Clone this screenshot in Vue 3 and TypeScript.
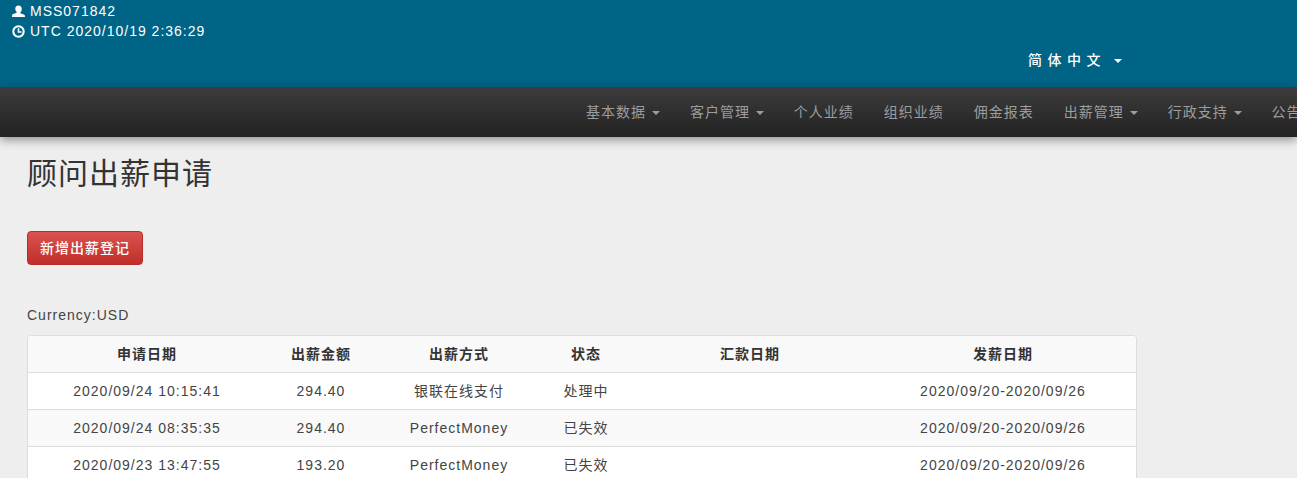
<script setup lang="ts">
interface NavItem { label: string; caret: boolean }
interface Row { applied: string; amount: string; method: string; status: string; remit: string; pay: string }
const navItems: NavItem[] = [
  { label: '基本数据', caret: true },
  { label: '客户管理', caret: true },
  { label: '个人业绩', caret: false },
  { label: '组织业绩', caret: false },
  { label: '佣金报表', caret: false },
  { label: '出薪管理', caret: true },
  { label: '行政支持', caret: true },
  { label: '公告查询', caret: false },
]
const columns = ['申请日期', '出薪金额', '出薪方式', '状态', '汇款日期', '发薪日期']
const rows: Row[] = [
  { applied: '2020/09/24 10:15:41', amount: '294.40', method: '银联在线支付', status: '处理中', remit: '', pay: '2020/09/20-2020/09/26' },
  { applied: '2020/09/24 08:35:35', amount: '294.40', method: 'PerfectMoney', status: '已失效', remit: '', pay: '2020/09/20-2020/09/26' },
  { applied: '2020/09/23 13:47:55', amount: '193.20', method: 'PerfectMoney', status: '已失效', remit: '', pay: '2020/09/20-2020/09/26' },
]
</script>

<template>
  <div class="page">
    <header class="top">
      <div class="info">
        <div class="line">
          <svg class="ico" viewBox="0 0 14 14" aria-hidden="true"><path d="M7 0.500c2.300 0 3.500 1.600 3.500 3.700 0 1.500-.6 2.800-1.500 3.500v1.200l3.600 1.300c.8.300 1.300.9 1.300 1.700V13H.1v-1.600c0-.8.500-1.400 1.300-1.700L5 8.400V7.200C4.100 6.500 3.500 5.200 3.500 4.200 3.500 2.100 4.700.5 7 .5z" fill="#fff"/></svg>
          <span>MSS071842</span>
        </div>
        <div class="line">
          <svg class="ico" viewBox="0 0 14 14" aria-hidden="true"><circle cx="7" cy="7" r="5.600" fill="none" stroke="#fff" stroke-width="2.200"/><path d="M7 3.600V7.500h3.200" fill="none" stroke="#fff" stroke-width="1.700"/></svg>
          <span>UTC 2020/10/19 2:36:29</span>
        </div>
      </div>
      <div class="lang">简体中文<b class="caret"></b></div>
    </header>

    <nav class="nav">
      <ul class="menu">
        <li v-for="item in navItems" :key="item.label" class="menu-item">
          {{ item.label }}<template v-if="item.caret">&nbsp;<b class="caret"></b></template>
        </li>
      </ul>
    </nav>

    <main class="content">
      <h1 class="title">顾问出薪申请</h1>
      <button class="btn" type="button">新增出薪登记</button>
      <p class="currency">Currency:USD</p>
      <div class="panel">
        <table class="table">
          <colgroup>
            <col class="c1" /><col class="c2" /><col class="c3" /><col class="c4" /><col class="c5" /><col class="c6" />
          </colgroup>
          <thead>
            <tr><th v-for="c in columns" :key="c">{{ c }}</th></tr>
          </thead>
          <tbody>
            <tr v-for="r in rows" :key="r.applied">
              <td>{{ r.applied }}</td>
              <td>{{ r.amount }}</td>
              <td>{{ r.method }}</td>
              <td>{{ r.status }}</td>
              <td>{{ r.remit }}</td>
              <td>{{ r.pay }}</td>
            </tr>
          </tbody>
        </table>
      </div>
    </main>
  </div>
</template>

<style scoped>
.page {
  width: 1297px;
  height: 478px;
  overflow: hidden;
  background: #eeeeee;
  color: #333;
  font-family: "Liberation Sans", "Noto Sans CJK SC", sans-serif;
  font-size: 14px;
  line-height: 20px;
  letter-spacing: 1px;
}
.top {
  height: 87px;
  background: #006487;
  color: #fff;
  position: relative;
}
.info {
  padding: 1px 0 0 12px;
}
.line {
  display: flex;
  align-items: center;
  gap: 5px;
}
.ico {
  width: 13px;
  height: 13px;
  flex: none;
}
.lang {
  position: absolute;
  left: 1028px;
  top: 50px;
  font-size: 14px;
  font-weight: 500;
  letter-spacing: 5.500px;
  white-space: nowrap;
}
.caret {
  display: inline-block;
  width: 0;
  height: 0;
  margin-left: 1px;
  vertical-align: middle;
  border-top: 4px solid;
  border-right: 4px solid transparent;
  border-left: 4px solid transparent;
}
.lang .caret {
  margin-left: 8px;
}
.nav {
  height: 50px;
  background: linear-gradient(to bottom, #3c3c3c 0%, #222222 100%);
  box-shadow: 0 3px 9px rgba(0, 0, 0, 0.4);
  position: relative;
}
.menu {
  display: flex;
  margin: 0 0 0 571px;
  padding: 0;
  list-style: none;
  white-space: nowrap;
}
.menu-item {
  padding: 15px;
  color: #9d9d9d;
  flex: none;
}
.content {
  width: 1110px;
  margin-left: 27px;
}
.title {
  margin: 0;
  padding-top: 20px;
  font-size: 30px;
  line-height: 33px;
  font-weight: 400;
  letter-spacing: 1px;
}
.btn {
  display: block;
  margin-top: 41px;
  width: 116px;
  height: 34px;
  padding: 0;
  border: 1px solid #b92c28;
  border-radius: 4px;
  background: linear-gradient(to bottom, #d9534f 0%, #c12e2a 100%);
  color: #fff;
  font: inherit;
  font-weight: 500;
  letter-spacing: 1px;
}
.currency {
  margin: 40px 0 0;
  color: #444;
}
.panel {
  margin-top: 10px;
  border: 1px solid #ddd;
  border-radius: 4px;
  background: #fff;
  overflow: hidden;
}
.table {
  width: 1108px;
  table-layout: fixed;
  border-collapse: collapse;
}
.c1 { width: 238px; }
.c2 { width: 110px; }
.c3 { width: 166px; }
.c4 { width: 88px; }
.c5 { width: 240px; }
.c6 { width: 266px; }
th, td {
  height: 37px;
  padding: 8px;
  text-align: center;
  box-sizing: border-box;
}
th {
  height: 36px;
  font-weight: bold;
  background: #f9f9f9;
  border-bottom: 1px solid #ddd;
}
td {
  color: #444;
  border-bottom: 1px solid #ddd;
}
tbody tr:nth-child(even) td {
  background: #f9f9f9;
}
</style>

<style>
html, body {
  margin: 0;
  overflow: hidden;
}
</style>
